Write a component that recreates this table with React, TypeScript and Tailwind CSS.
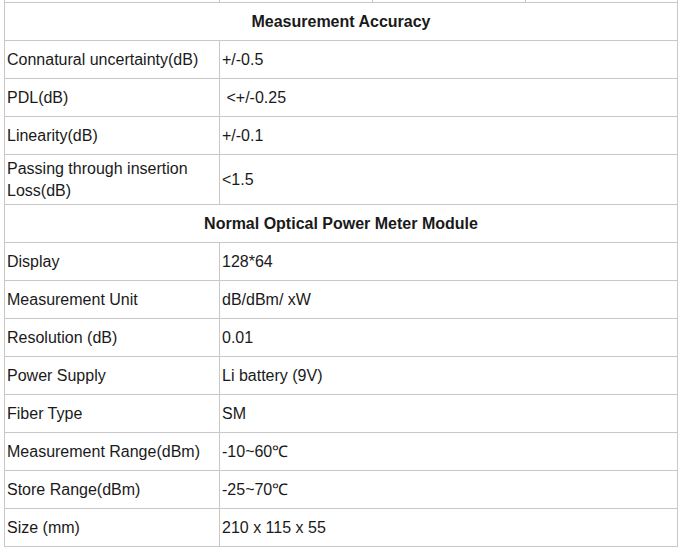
const accuracy = [
  ["Connatural uncertainty(dB)", "+/-0.5"],
  ["PDL(dB)", "\u00a0<+/-0.25"],
  ["Linearity(dB)", "+/-0.1"],
];

const meter = [
  ["Display", "128*64"],
  ["Measurement Unit", "dB/dBm/ xW"],
  ["Resolution (dB)", "0.01"],
  ["Power Supply", "Li battery (9V)"],
  ["Fiber Type", "SM"],
  ["Measurement Range(dBm)", "-10~60\u2103"],
  ["Store Range(dBm)", "-25~70\u2103"],
  ["Size (mm)", "210 x 115 x 55"],
];

function Row({ label, value }: { label: string; value: string }) {
  return (
    <tr className="h-[38px]">
      <td className="w-[215px] border border-[#c8c8c8] pl-[2px] align-middle">{label}</td>
      <td className="border border-[#c8c8c8] pl-[2px] align-middle">{value}</td>
    </tr>
  );
}

function Header({ title }: { title: string }) {
  return (
    <tr className="h-[38px]">
      <td colSpan={2} className="border border-[#c8c8c8] text-center align-middle font-bold">
        {title}
      </td>
    </tr>
  );
}

export default function App() {
  return (
    <div
      className="h-[551px] w-[681px] bg-white pl-1 text-[16px] leading-[22px] text-[#1a1a1a]"
      style={{ fontFamily: '"Liberation Sans", Arial, sans-serif' }}
    >
      <div className="flex h-[2px] w-[674px]">
        <div className="w-[215px] border-l border-[#c8c8c8]" />
        <div className="w-[153px] border-l border-[#c8c8c8]" />
        <div className="w-[153px] border-l border-[#c8c8c8]" />
        <div className="flex-1 border-x border-[#c8c8c8]" />
      </div>
      <table className="w-[674px] table-fixed border-collapse">
        <colgroup>
          <col className="w-[215px]" />
          <col />
        </colgroup>
        <tbody>
          <Header title="Measurement Accuracy" />
          {accuracy.map(([l, v]) => (
            <Row key={l} label={l} value={v} />
          ))}
          <tr className="h-[50px]">
            <td className="border border-[#c8c8c8] pl-[2px] align-middle">
              Passing through insertion
              <br />
              Loss(dB)
            </td>
            <td className="border border-[#c8c8c8] pl-[2px] align-middle">&lt;1.5</td>
          </tr>
          <Header title="Normal Optical Power Meter Module" />
          {meter.map(([l, v]) => (
            <Row key={l} label={l} value={v} />
          ))}
        </tbody>
      </table>
    </div>
  );
}
